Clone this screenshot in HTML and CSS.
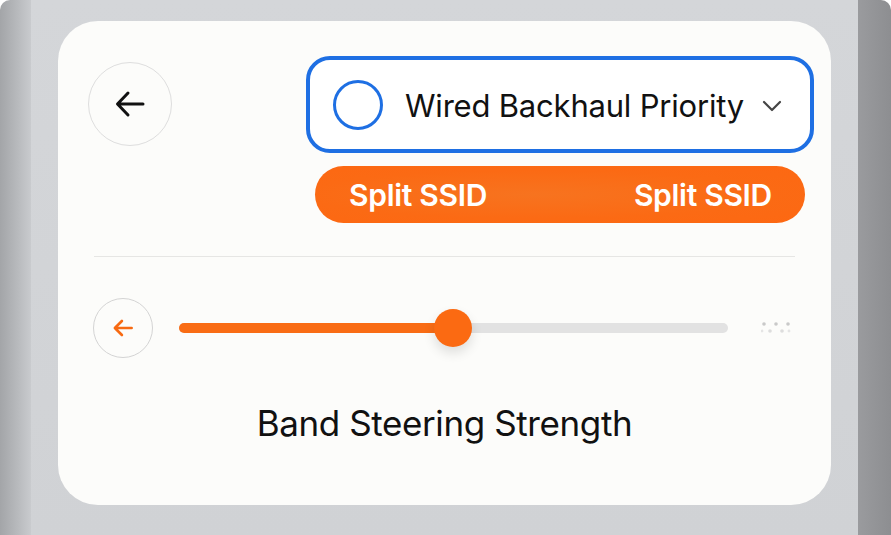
FILE: index.html
```html
<!DOCTYPE html>
<html>
<head>
<meta charset="utf-8">
<link rel="stylesheet" href="styles.css">
</head>
<body>
<div class="frame">
  <div class="strip-left"></div>
  <div class="stage">
    <div class="card">
      <div class="top">
        <button class="back" aria-label="Back">
          <svg width="36" height="36" viewBox="0 0 36 36"><path d="M31 18H6M16 7L5.5 18 16 29" fill="none" stroke="#111" stroke-width="3" stroke-linecap="round" stroke-linejoin="round"/></svg>
        </button>
        <div class="controls">
          <div class="select">
            <span class="radio"></span>
            <span class="select-label">Wired Backhaul Priority</span>
            <svg class="chev" width="20" height="12" viewBox="0 0 20 12"><path d="M2 2l8 8 8-8" fill="none" stroke="#444" stroke-width="2.2" stroke-linecap="round" stroke-linejoin="round"/></svg>
          </div>
          <div class="pill"><span>Split SSID</span><span>Split SSID</span></div>
        </div>
      </div>
      <div class="divider"></div>
      <div class="slider-row">
        <button class="mini-back" aria-label="Back">
          <svg width="26" height="26" viewBox="0 0 24 24"><path d="M20 12H5M11 5.5L4.5 12 11 18.5" fill="none" stroke="#f76a12" stroke-width="2.4" stroke-linecap="round" stroke-linejoin="round"/></svg>
        </button>
        <div class="track">
          <div class="fill" style="width:49.9%"></div>
          <div class="thumb" style="left:49.9%"></div>
        </div>
        <svg class="dots" width="30" height="14" viewBox="0 0 30 14"><g fill="#c9c9c9"><circle cx="3" cy="3" r="1.8"/><circle cx="15" cy="3" r="1.8"/><circle cx="27" cy="3" r="1.8"/><circle cx="9" cy="10" r="1.8" fill="#ddd"/><circle cx="21" cy="10" r="1.8" fill="#ddd"/><circle cx="1" cy="10" r="1.4" fill="#e5e5e5"/><circle cx="28" cy="10" r="1.4" fill="#e5e5e5"/></g></svg>
      </div>
      <div class="caption">Band Steering Strength</div>
    </div>
  </div>
  <div class="strip-right"></div>
</div>
</body>
</html>
```

FILE: styles.css
```css
* { box-sizing: border-box; }
html, body { margin: 0; padding: 0; }
body {
  width: 891px;
  height: 535px;
  overflow: hidden;
  background: #ffffff;
  font-family: Inter, "Noto Sans", sans-serif;
}
.frame {
  display: flex;
  height: 535px;
}
.strip-left {
  width: 31px;
  background: linear-gradient(90deg, #a3a5a8 0%, #b9bbbe 60%, #c9cbce 100%);
  border-top-left-radius: 10px;
}
.strip-right {
  width: 33px;
  background: linear-gradient(90deg, #9a9b9e 0%, #8d8e91 100%);
  border-top-right-radius: 10px;
}
.stage {
  flex: 1;
  background: linear-gradient(180deg, #d4d6d9 0%, #d0d2d5 100%);
  padding: 21px 27px 30px 27px;
}
.card {
  height: 484px;
  background: #fcfcfa;
  border-radius: 40px;
  padding: 35px 17px 0 30px;
  display: flex;
  flex-direction: column;
}
.top {
  display: flex;
  align-items: flex-start;
}
.back {
  width: 84px;
  height: 84px;
  margin-top: 6px;
  border-radius: 50%;
  border: 1px solid #dedede;
  background: #fcfcfa;
  display: flex;
  align-items: center;
  justify-content: center;
  padding: 0;
}
.controls {
  margin-left: 134px;
  display: flex;
  flex-direction: column;
  align-items: flex-start;
}
.select {
  width: 508px;
  height: 97px;
  border: 4px solid #1e6fe3;
  border-radius: 24px;
  background: #ffffff;
  display: flex;
  align-items: center;
  padding-left: 23px;
}
.radio {
  width: 50px;
  height: 50px;
  border: 3px solid #1e6fe3;
  border-radius: 50%;
}
.select-label {
  margin-left: 22px;
  margin-top: 2px;
  font-size: 31px;
  color: #111;
  letter-spacing: -0.2px;
}
.chev {
  margin-left: 18px;
  margin-top: 2px;
}
.pill {
  margin-top: 13px;
  margin-left: 9px;
  width: 490px;
  height: 57px;
  border-radius: 29px;
  background: radial-gradient(ellipse at 45% 50%, #f7731f 0%, #fb6a14 60%, #fd6812 100%);
  display: flex;
  align-items: center;
  justify-content: space-between;
  padding: 0 33px 0 34px;
  color: #fff;
  font-size: 30px;
  font-weight: 600;
  letter-spacing: -0.3px;
}
.divider {
  margin: 33px 19px 0 6px;
  height: 1px;
  background: #e6e6e4;
}
.slider-row {
  margin-top: 41px;
  display: flex;
  align-items: center;
  padding-left: 5px;
}
.mini-back {
  width: 60px;
  height: 60px;
  border-radius: 50%;
  border: 1.5px solid #d4d4d4;
  background: #fcfcfa;
  display: flex;
  align-items: center;
  justify-content: center;
  padding: 0;
}
.track {
  position: relative;
  margin-left: 26px;
  width: 549px;
  height: 10px;
  border-radius: 5px;
  background: #e2e2e2;
}
.fill {
  height: 10px;
  border-radius: 5px;
  background: #f96c14;
}
.thumb {
  position: absolute;
  top: 50%;
  width: 38px;
  height: 38px;
  margin: -19px 0 0 -19px;
  border-radius: 50%;
  background: #fb6a12;
  box-shadow: 0 6px 12px rgba(0,0,0,0.12);
}
.dots {
  margin-left: 33px;
}
.caption {
  margin-top: 44px;
  text-align: center;
  margin-left: -30px;
  margin-right: -17px;
  font-size: 35px;
  color: #111;
  letter-spacing: -0.4px;
}
```
